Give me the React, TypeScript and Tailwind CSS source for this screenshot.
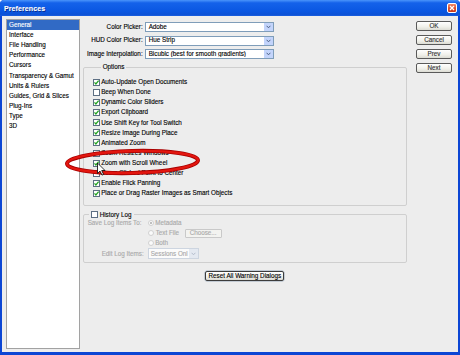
import React from "react";

function Check({ checked, disabled }: { checked?: boolean; disabled?: boolean }) {
  return (
    <svg width="7" height="7" viewBox="0 0 7 7" className="shrink-0">
      <rect x="0.5" y="0.5" width="6" height="6" fill="#fff" stroke={disabled ? "#c4c4c4" : "#5d6f83"} strokeWidth="1" />
      {checked && (
        <path d="M1.5 3.4 L2.9 4.9 L5.6 1.7" fill="none" stroke="#22a322" strokeWidth="1.3" />
      )}
    </svg>
  );
}

function Radio({ on }: { on?: boolean }) {
  return (
    <svg width="6" height="6" viewBox="0 0 6 6" className="shrink-0">
      <circle cx="3" cy="3" r="2.5" fill="#fbfbfb" stroke="#c8c8c8" strokeWidth="0.8" />
      {on && <circle cx="3" cy="3" r="1.1" fill="#b0b0b0" />}
    </svg>
  );
}

function Arrow({ disabled }: { disabled?: boolean }) {
  return (
    <div className={`w-[9px] h-full shrink-0 flex items-center justify-center ${disabled ? "bg-[#e4e9f1]" : "bg-[#c3d4fb]"}`}>
      <svg width="5" height="4" viewBox="0 0 5 4">
        <path d="M0.6 0.8 L2.5 2.8 L4.4 0.8" fill="none" stroke={disabled ? "#b4bccb" : "#4d6185"} strokeWidth="1" />
      </svg>
    </div>
  );
}

function Dropdown({ label, value }: { label: string; value: string }) {
  return (
    <div className="flex items-center h-[10px]">
      <div className="w-[60px] text-right whitespace-nowrap">{label}</div>
      <div className="ml-[2px] w-[129px] h-[10px] border border-[#7f9db9] bg-white flex items-center">
        <div className="flex-1 pl-[3px] whitespace-nowrap overflow-hidden">{value}</div>
        <Arrow />
      </div>
    </div>
  );
}

function Btn({ children }: { children: React.ReactNode }) {
  return (
    <div className="w-[36px] h-[10px] border border-[#5a5a5a] rounded-[2px] bg-[linear-gradient(to_bottom,#ffffff,#f0f0ea_60%,#dcdcd4)] flex items-center justify-center text-[#333]">
      {children}
    </div>
  );
}

const listItems = [
  "General",
  "Interface",
  "File Handling",
  "Performance",
  "Cursors",
  "Transparency & Gamut",
  "Units & Rulers",
  "Guides, Grid & Slices",
  "Plug-Ins",
  "Type",
  "3D",
];

const options: [string, boolean][] = [
  ["Auto-Update Open Documents", true],
  ["Beep When Done", false],
  ["Dynamic Color Sliders", true],
  ["Export Clipboard", true],
  ["Use Shift Key for Tool Switch", true],
  ["Resize Image During Place", true],
  ["Animated Zoom", true],
  ["Zoom Resizes Windows", false],
  ["Zoom with Scroll Wheel", true],
  ["Zoom Clicked Point to Center", false],
  ["Enable Flick Panning", true],
  ["Place or Drag Raster Images as Smart Objects", true],
];

export default function App() {
  return (
    <div className="relative w-[460px] h-[355px] bg-[#0c46d4] rounded-t-[4px] flex flex-col font-['Liberation_Sans',Arial,sans-serif] text-[6.3px] leading-none text-black overflow-hidden [-webkit-text-stroke:0.12px]">
      {/* Title bar */}
      <div className="h-[16px] shrink-0 flex items-center justify-between pl-[4px] pr-[3px] rounded-t-[4px] bg-[linear-gradient(to_bottom,#4a94fb,#1462ea_18%,#0a57e2_70%,#0c52d6_90%,#1a5fe0)]">
        <span className="text-white font-bold text-[7px] tracking-[0.1px] [text-shadow:1px_1px_0_#0a2a8a]">Preferences</span>
        <div className="w-[10px] h-[10px] mt-[-1px] rounded-[2px] border border-white bg-[linear-gradient(to_bottom,#ef8a6a,#e0502c_50%,#c8381a)] flex items-center justify-center">
          <svg width="6" height="6" viewBox="0 0 6 6">
            <path d="M1 1 L5 5 M5 1 L1 5" stroke="#fff" strokeWidth="1.3" />
          </svg>
        </div>
      </div>

      {/* Body */}
      <div className="flex-1 mx-[2px] mb-[3px] bg-[#ededed] flex pt-[3px] pl-[4px] pb-[3px] pr-[6px]">
        {/* Left list */}
        <div className="w-[74px] border border-[#a2a2a2] bg-white flex flex-col">
          {listItems.map((t, i) => (
            <div
              key={t}
              className={`h-[10.15px] flex items-center pl-[2px] whitespace-nowrap ${i === 0 ? "bg-[#316ac5] text-white" : ""}`}
            >
              {t}
            </div>
          ))}
        </div>

        {/* Middle column */}
        <div className="w-[326px] ml-[3px] flex flex-col">
          <div className="mt-[3px] flex flex-col gap-[3.5px]">
            <Dropdown label="Color Picker:" value="Adobe" />
            <Dropdown label="HUD Color Picker:" value="Hue Strip" />
            <Dropdown label="Image Interpolation:" value="Bicubic (best for smooth gradients)" />
          </div>

          <fieldset className="mt-[5px] border border-[#cfcfcf] rounded-[2px] pl-[9px] pt-[7px] pb-[7px]">
            <legend className="ml-[8px] px-[2px]">Options</legend>
            {options.map(([t, c]) => (
              <div key={t} className="h-[10.1px] flex items-center whitespace-nowrap">
                <Check checked={c} />
                <span className="ml-[1.5px]">{t}</span>
              </div>
            ))}
          </fieldset>

          <fieldset className="mt-[5px] border border-[#cfcfcf] rounded-[2px] pb-[3px] text-[#a9a9a9]">
            <legend className="ml-[5px] px-[2px] flex items-center text-black">
              <Check />
              <span className="ml-[2px]">History Log</span>
            </legend>
            <div className="h-[10px] flex items-center whitespace-nowrap">
              <div className="w-[60px] pl-[4px]">Save Log Items To:</div>
              <div className="ml-[4px] flex items-center">
                <Radio on />
                <span className="ml-[1.5px]">Metadata</span>
              </div>
            </div>
            <div className="h-[10px] flex items-center whitespace-nowrap">
              <div className="w-[64px]" />
              <Radio />
              <span className="ml-[2px] w-[29px]">Text File</span>
              <div className="w-[37px] h-[9px] border border-[#c9c9c9] rounded-[1px] bg-[#f3f3f0] flex items-center justify-center">
                Choose...
              </div>
            </div>
            <div className="h-[10px] flex items-center whitespace-nowrap">
              <div className="w-[64px]" />
              <Radio />
              <span className="ml-[1.5px]">Both</span>
            </div>
            <div className="h-[11px] flex items-center whitespace-nowrap">
              <div className="w-[60px] text-right">Edit Log Items:</div>
              <div className="ml-[4px] w-[51px] h-[11px] border border-[#cdd5e0] bg-[#fbfbfb] flex items-center">
                <div className="flex-1 pl-[2px] overflow-hidden whitespace-nowrap">Sessions Onl</div>
                <Arrow disabled />
              </div>
            </div>
          </fieldset>

          <div className="mt-[8px] flex justify-center">
            <div className="w-[79px] h-[10px] border border-[#3c3c3c] rounded-[2px] bg-[linear-gradient(to_bottom,#ffffff,#efefea_60%,#dadad2)] flex items-center justify-center whitespace-nowrap shadow-[0_0_0_0.5px_#9ab]">
              Reset All Warning Dialogs
            </div>
          </div>
        </div>

        {/* Right buttons */}
        <div className="ml-[9px] mt-[2px] flex flex-col gap-[4px]">
          <Btn>OK</Btn>
          <Btn>Cancel</Btn>
          <Btn>Prev</Btn>
          <Btn>Next</Btn>
        </div>
      </div>

      {/* Annotation overlay: red ellipse and cursor */}
      <svg className="absolute inset-0 pointer-events-none" width="460" height="355" viewBox="0 0 460 355">
        <g transform="rotate(-1.5 132.5 162)">
          <ellipse cx="132.5" cy="162" rx="65.5" ry="11" fill="none" stroke="#a80000" strokeWidth="4" />
          <ellipse cx="132.5" cy="162" rx="65.5" ry="11" fill="none" stroke="#e3160f" strokeWidth="2.4" />
        </g>
        <path
          d="M97.5 163 L97.5 173.5 L100 171.1 L102 175.1 L103.6 174.4 L101.7 170.5 L105 170.5 Z"
          fill="#fff"
          stroke="#000"
          strokeWidth="0.8"
          strokeLinejoin="round"
        />
      </svg>
    </div>
  );
}
